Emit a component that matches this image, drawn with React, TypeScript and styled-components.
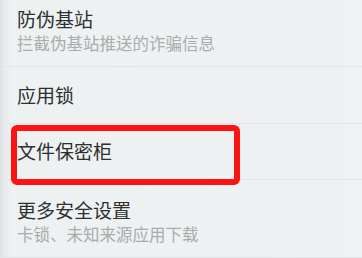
import styled, { createGlobalStyle } from 'styled-components';

const GlobalStyle = createGlobalStyle`
  html, body {
    margin: 0;
    padding: 0;
    background: #edf1f2;
    overflow: hidden;
  }
  body {
    font-family: "Noto Sans CJK SC", "Noto Sans", sans-serif;
  }
`;

// Settings page, scrolled a little so the first row is cut at the top
const Page = styled.div`
  width: 362px;
  height: 258px;
  overflow: hidden;
  background: linear-gradient(90deg, #dfe2e3 0px, #e9eced 5px, #edf1f2 12px, #eef2f3 100%);
`;

const List = styled.div`
  display: flex;
  flex-direction: column;
  margin-top: -11px;
`;

const Row = styled.div<{ $twoLine: boolean }>`
  position: relative;
  display: flex;
  flex-direction: column;
  justify-content: ${props => (props.$twoLine ? 'flex-start' : 'center')};
  box-sizing: border-box;
  height: ${props => (props.$twoLine ? '78px' : '56.5px')};
  padding: ${props => (props.$twoLine ? '19px 0 0 17px' : '0 0 1px 17px')};
  border-bottom: 1px solid #e1e5e6;
`;

const Title = styled.div`
  font-size: 19px;
  line-height: 21px;
  color: #2e2f2f;
  letter-spacing: 0;
`;

const Subtitle = styled.div`
  margin-top: 4px;
  font-size: 16.5px;
  line-height: 20px;
  color: #a9acac;
`;

// red marker drawn over the row
const Highlight = styled.div`
  position: absolute;
  left: 11px;
  top: 1px;
  width: 229px;
  height: 60px;
  box-sizing: border-box;
  border: 6px solid #fc1414;
  border-radius: 6px;
  pointer-events: none;
`;

type Item = {
  title: string;
  subtitle?: string;
  marked?: boolean;
};

const items: Item[] = [
  { title: '防伪基站', subtitle: '拦截伪基站推送的诈骗信息' },
  { title: '应用锁' },
  { title: '文件保密柜', marked: true },
  { title: '更多安全设置', subtitle: '卡锁、未知来源应用下载' },
];

export default function App() {
  return (
    <>
      <GlobalStyle />
      <Page>
        <List>
          {items.map(item => (
            <Row key={item.title} $twoLine={!!item.subtitle}>
              <Title>{item.title}</Title>
              {item.subtitle && <Subtitle>{item.subtitle}</Subtitle>}
              {item.marked && <Highlight />}
            </Row>
          ))}
        </List>
      </Page>
    </>
  );
}
